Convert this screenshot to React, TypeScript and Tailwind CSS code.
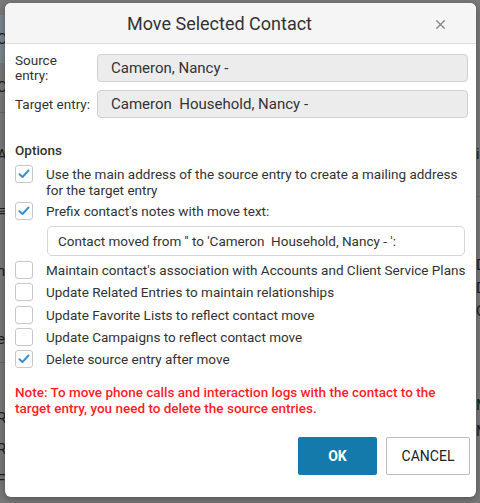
import { X } from 'lucide-react';

const Check = ({ checked }: { checked: boolean }) => (
  <span className="w-[18px] h-[18px] shrink-0 rounded-[3px] border border-[#c8c8c8] bg-white flex items-center justify-center">
    {checked && (
      <svg width="12" height="10" viewBox="0 0 12 10" fill="none">
        <path d="M1.5 5.2 L4.5 8 L10.5 1.5" stroke="#3b8fd9" strokeWidth="2" strokeLinecap="round" strokeLinejoin="round" />
      </svg>
    )}
  </span>
);

const Option = ({ checked, children }: { checked: boolean; children: React.ReactNode }) => (
  <div className="flex items-start gap-[13px]">
    <Check checked={checked} />
    <span className="leading-[16px] pt-[1px]">{children}</span>
  </div>
);

// strips of the page that shows round the dialog, behind the dim overlay
const leftStrip: [number, string][] = [
  [15, ''], [48, 'C'], [50, 'C'], [84, 'A'], [28, '≡'], [92, 'n'], [46, 'e'], [37, ''], [36, 'R'], [26, 'R'], [36, 'F'],
];
const rightStrip: [number, string][] = [
  [113, ''], [84, 'i'], [56, ''], [24, 'D'], [22, 'D'], [24, 'C'], [70, ''], [24, 'M'], [28, 'M'],
];

export default function App() {
  return (
    <div
      className="relative w-[480px] h-[503px] overflow-hidden bg-[#7a7a7a] text-[#222]"
      style={{ fontFamily: 'Roboto, "Liberation Sans", sans-serif' }}
    >
      <div className="flex justify-between h-full text-[15px] text-[#1e1e1e]">
        <div className="flex flex-col w-[6px]">
          {leftStrip.map(([h, c], i) => (
            <div
              key={i}
              className={`flex items-center ml-[-3px] ${i === 1 ? 'bg-[#7c8790]' : ''} ${i === 2 || i === 6 ? 'border-b border-[#666]' : ''}`}
              style={{ height: h }}
            >
              {c}
            </div>
          ))}
        </div>
        <div className="flex flex-col w-[4px]">
          {rightStrip.map(([h, c], i) => (
            <div key={i} className={`flex items-center ${i === 1 ? 'border-b border-[#5f7383]' : ''}`} style={{ height: h }}>
              {c}
            </div>
          ))}
        </div>
      </div>

      {/* dialog */}
      <div className="absolute left-[5px] top-[3px] w-[471px] h-[494px] bg-white rounded-[6px] shadow-[0_2px_8px_rgba(0,0,0,0.35)] overflow-hidden flex flex-col">
        <div className="relative h-[41px] shrink-0 bg-[#f5f5f5] border-b border-[#dedede] flex items-center justify-center">
          <span className="text-[18px] text-[#333] ml-[-42px]">Move Selected Contact</span>
          <X className="absolute right-[28px] top-[14px] w-[15px] h-[15px] text-[#8a8a8a]" strokeWidth={2.2} />
        </div>

        <div className="px-[10px] pt-[9px] text-[13.5px]">
          <div className="flex items-center gap-[8px]">
            <div className="w-[74px] leading-[15px] text-[#333]">Source<br />entry:</div>
            <div className="flex-1 h-[28px] mr-[-2px] rounded-[4px] border border-[#d0d0d0] bg-[#ececec] flex items-center px-[13px] text-[15px] text-[#333]">
              Cameron, Nancy -
            </div>
          </div>
          <div className="flex items-center gap-[8px] mt-[7px]">
            <div className="w-[74px] whitespace-nowrap text-[#333]">Target entry:</div>
            <div className="flex-1 h-[28px] mr-[-2px] rounded-[4px] border border-[#d0d0d0] bg-[#ececec] flex items-center px-[13px] text-[15px] text-[#333] whitespace-pre">
              Cameron  Household, Nancy -
            </div>
          </div>

          <div className="mt-[22px] leading-[20px] font-medium text-[#333]">Options</div>
          <div className="mt-[5px] flex flex-col text-[#333]">
            <Option checked>
              Use the main address of the source entry to create a mailing address for the target entry
            </Option>
            <div className="mt-[4px]">
              <Option checked>Prefix contact's notes with move text:</Option>
            </div>
            <div className="ml-[32px] mr-[1px] mt-[6px] h-[30px] rounded-[5px] border border-[#d6d6d6] bg-white flex items-center px-[10px] whitespace-pre text-[#333]">
              Contact moved from '' to 'Cameron  Household, Nancy - ':
            </div>
            <div className="mt-[5px] flex flex-col gap-[4.25px]">
              <Option checked={false}>Maintain contact's association with Accounts and Client Service Plans</Option>
              <Option checked={false}>Update Related Entries to maintain relationships</Option>
              <Option checked={false}>Update Favorite Lists to reflect contact move</Option>
              <Option checked={false}>Update Campaigns to reflect contact move</Option>
              <Option checked>Delete source entry after move</Option>
            </div>
          </div>

          <p className="mt-[16px] text-[13.5px] leading-[16px] font-medium text-[#ff1f1f]">
            Note: To move phone calls and interaction logs with the contact to the target entry, you need to delete the source entries.
          </p>

          <div className="mt-[21px] flex justify-end gap-[9px] mr-[-4px]">
            <button className="w-[79px] h-[38px] rounded-[2px] bg-[#137aab] text-white text-[14px] font-bold">OK</button>
            <button className="w-[84px] h-[38px] rounded-[2px] border border-[#bdbdbd] bg-white text-[#222] text-[14px]">CANCEL</button>
          </div>
        </div>
      </div>
    </div>
  );
}
